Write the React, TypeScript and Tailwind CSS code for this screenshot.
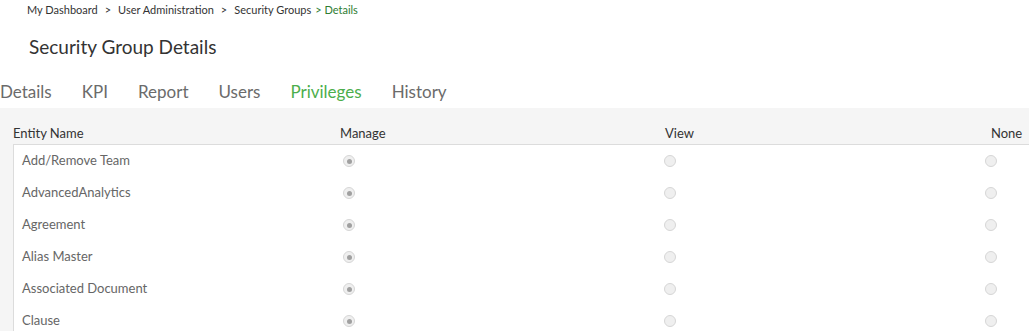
import React from "react";

const tabs = ["Details", "KPI", "Report", "Users", "Privileges", "History"];

const rows = [
  "Add/Remove Team",
  "AdvancedAnalytics",
  "Agreement",
  "Alias Master",
  "Associated Document",
  "Clause",
];

function Radio({ checked }: { checked?: boolean }) {
  return (
    <span className="flex h-[12px] w-[12px] items-center justify-center rounded-full border border-[#d6d6d6] bg-[#efefef]">
      {checked && <span className="h-[5px] w-[5px] rounded-full bg-[#a0a0a0]" />}
    </span>
  );
}

export default function App() {
  return (
    <div
      className="h-[331px] w-[1029px] overflow-hidden bg-white text-[#333]"
      style={{ fontFamily: "Lato, 'Liberation Sans', sans-serif" }}
    >
      <div className="flex items-center gap-[4px] pl-[27px] pt-[2px] text-[11px] leading-[16px]">
        <span>My Dashboard</span>
        <span className="px-[3px]">&gt;</span>
        <span>User Administration</span>
        <span className="px-[3px]">&gt;</span>
        <span>Security Groups</span>
        <span className="text-[#2e7d32]">&gt; Details</span>
      </div>

      <h1 className="pl-[29px] pt-[16px] text-[19px] leading-[26px] text-[#333]">
        Security Group Details
      </h1>

      <div className="flex gap-[30px] pt-[20px] text-[17px] leading-[24px]">
        {tabs.map((t) => (
          <span
            key={t}
            className={t === "Privileges" ? "text-[#4cae4c]" : "text-[#6b6b6b]"}
          >
            {t}
          </span>
        ))}
      </div>

      <div className="mt-[4px] bg-[#f5f5f5] pl-[13px] pt-[16px]">
        <div className="flex text-[13px] leading-[18px] text-[#333]">
          <div className="w-[327px] shrink-0">Entity Name</div>
          <div className="w-[325px] shrink-0">Manage</div>
          <div className="w-[326px] shrink-0">View</div>
          <div className="w-[326px] shrink-0">None</div>
        </div>
        <div className="mt-[2px] w-[1320px] border-l border-t border-[#dcdcdc] bg-white">
          {rows.map((r) => (
            <div key={r} className="flex h-[32px] items-center text-[13px] text-[#666]">
              <div className="w-[327px] shrink-0 pl-[8px]">{r}</div>
              <div className="w-[323px] shrink-0 pl-[2px]">
                <Radio checked />
              </div>
              <div className="w-[321px] shrink-0">
                <Radio />
              </div>
              <div className="w-[326px] shrink-0">
                <Radio />
              </div>
            </div>
          ))}
        </div>
      </div>
    </div>
  );
}
